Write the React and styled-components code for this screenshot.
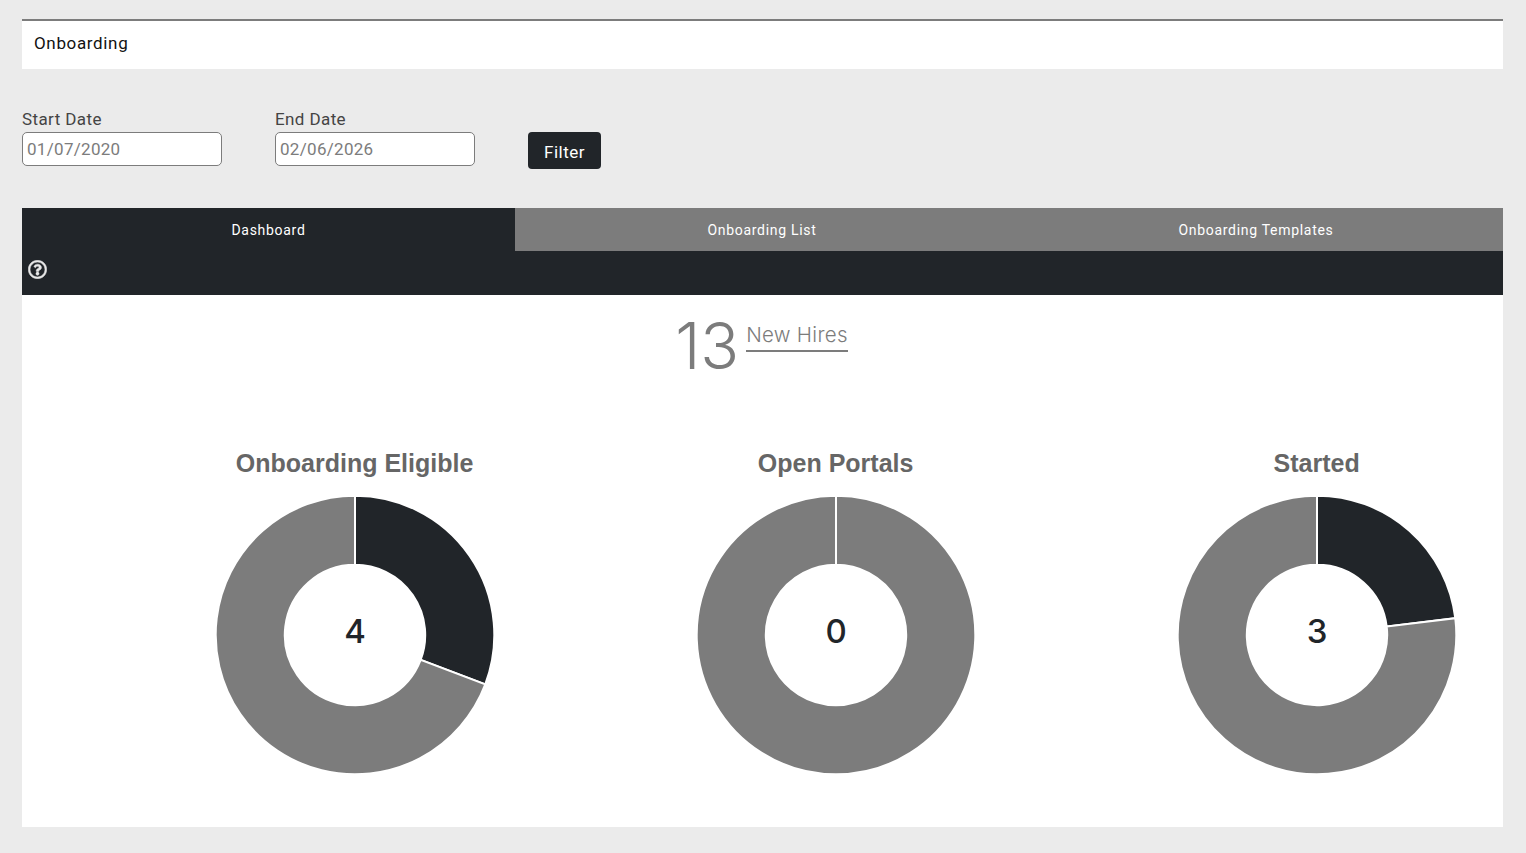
import React from 'react';
import styled, { createGlobalStyle } from 'styled-components';
import { FaRegQuestionCircle } from 'react-icons/fa';

const DARK = '#212529';
const GREY = '#7c7c7c';

const charts = [
  { title: 'Onboarding Eligible', value: 4 },
  { title: 'Open Portals', value: 0 },
  { title: 'Started', value: 3 },
];
const TOTAL = 13;

const GlobalStyle = createGlobalStyle`
  html, body {
    margin: 0;
    padding: 0;
    background: #ebebeb;
    font-family: Roboto, "Liberation Sans", sans-serif;
  }
  * { box-sizing: border-box; }
`;

const Page = styled.div`
  padding: 19px 23px 26px 22px;
`;

const Header = styled.div`
  height: 50px;
  background: #fff;
  border-top: 2px solid ${GREY};
  padding: 0 12px 4px;
  display: flex;
  align-items: center;
  font-size: 17px;
  letter-spacing: 0.65px;
  color: #111;
`;

const FilterRow = styled.div`
  display: flex;
  align-items: flex-start;
  gap: 53px;
  margin-top: 41px;
`;

const Field = styled.div`
  width: 200px;
  display: flex;
  flex-direction: column;
`;

const Label = styled.label`
  height: 22px;
  line-height: 18px;
  font-size: 17px;
  letter-spacing: 0.4px;
  color: #444;
`;

const DateInput = styled.input`
  width: 200px;
  height: 34px;
  padding: 0 4px;
  background: #fff;
  border: 1px solid ${GREY};
  border-radius: 5px;
  font: inherit;
  font-size: 17px;
  letter-spacing: 0.3px;
  color: ${GREY};
  outline: none;
`;

const FilterButton = styled.button`
  width: 73px;
  height: 37px;
  margin-top: 22px;
  padding-top: 3px;
  background: ${DARK};
  border: none;
  border-radius: 4px;
  color: #fff;
  font: inherit;
  font-size: 17px;
  letter-spacing: 0.5px;
`;

const Tabs = styled.div`
  display: grid;
  grid-template-columns: 493px 494px 494px;
  margin-top: 39px;
`;

const Tab = styled.div`
  height: 43px;
  display: flex;
  align-items: center;
  justify-content: center;
  background: ${p => (p.$active ? DARK : GREY)};
  color: #fff;
  font-size: 14px;
  letter-spacing: 0.7px;
`;

const HelpBar = styled.div`
  height: 44px;
  padding: 8.5px 0 0 6px;
  background: ${DARK};
  color: #e8e8e8;
  svg {
    display: block;
    stroke: currentColor;
    stroke-width: 14;
  }
`;

const Content = styled.div`
  height: 532px;
  background: #fff;
`;

const HiresRow = styled.div`
  display: flex;
  justify-content: center;
  align-items: flex-start;
  gap: 7px;
  padding: 15px 2px 0 0;
  color: ${GREY};
  font-family: Inter, Roboto, sans-serif;
`;

const HiresCount = styled.div`
  font-size: 64px;
  font-weight: 350;
  line-height: 72px;
`;

const HiresLabel = styled.div`
  margin-top: 11px;
  height: 31px;
  border-bottom: 2px solid ${GREY};
  font-size: 20.5px;
  font-weight: 300;
  line-height: 27px;
  letter-spacing: 0.3px;
`;

const ChartRow = styled.div`
  display: flex;
  gap: 203px;
  margin-top: 67px;
  padding-left: 193.6px;
`;

const ChartCard = styled.div`
  width: 278px;
  display: flex;
  flex-direction: column;
  align-items: center;
`;

const ChartTitle = styled.div`
  height: 47px;
  font-family: "Liberation Sans", Arial, sans-serif;
  font-size: 25px;
  font-weight: 700;
  line-height: 29px;
  color: #666;
  white-space: nowrap;
`;

const DonutWrap = styled.div`
  position: relative;
  width: 278px;
  height: 278px;
  svg { display: block; }
`;

const DonutValue = styled.div`
  position: absolute;
  left: 1px;
  right: 0;
  top: 115px;
  text-align: center;
  font-family: Inter, sans-serif;
  font-size: 33px;
  font-weight: 550;
  line-height: 40px;
  color: ${DARK};
`;

// point on a circle, clockwise from twelve o'clock
const polar = (r, turn) => {
  const a = turn * 2 * Math.PI;
  return [139 + r * Math.sin(a), 139 - r * Math.cos(a)];
};

const slicePath = (from, to) => {
  const R = 139.3;
  const r = 70.2;
  const large = to - from > 0.5 ? 1 : 0;
  const [x1, y1] = polar(R, from);
  const [x2, y2] = polar(R, to);
  const [x3, y3] = polar(r, to);
  const [x4, y4] = polar(r, from);
  return `M${x1} ${y1}A${R} ${R} 0 ${large} 1 ${x2} ${y2}L${x3} ${y3}A${r} ${r} 0 ${large} 0 ${x4} ${y4}Z`;
};

const Donut = ({ value }) => {
  const share = value / TOTAL;
  return (
    <DonutWrap>
      <svg width="278" height="278" viewBox="0 0 278 278">
        {share > 0 && <path d={slicePath(0, share)} fill={DARK} stroke="#fff" strokeWidth="2" />}
        <path d={slicePath(share, share + (1 - share) * 0.99999)} fill={GREY} stroke="#fff" strokeWidth="2" />
      </svg>
      <DonutValue>{value}</DonutValue>
    </DonutWrap>
  );
};

const App = () => (
  <>
    <GlobalStyle />
    <Page>
      <Header>Onboarding</Header>

      <FilterRow>
        <Field>
          <Label>Start Date</Label>
          <DateInput defaultValue="01/07/2020" />
        </Field>
        <Field>
          <Label>End Date</Label>
          <DateInput defaultValue="02/06/2026" />
        </Field>
        <FilterButton>Filter</FilterButton>
      </FilterRow>

      <Tabs>
        <Tab $active>Dashboard</Tab>
        <Tab>Onboarding List</Tab>
        <Tab>Onboarding Templates</Tab>
      </Tabs>
      <HelpBar>
        <FaRegQuestionCircle size={19} />
      </HelpBar>

      <Content>
        <HiresRow>
          <HiresCount>13</HiresCount>
          <HiresLabel>New Hires</HiresLabel>
        </HiresRow>
        <ChartRow>
          {charts.map(c => (
            <ChartCard key={c.title}>
              <ChartTitle>{c.title}</ChartTitle>
              <Donut value={c.value} />
            </ChartCard>
          ))}
        </ChartRow>
      </Content>
    </Page>
  </>
);

export default App;
